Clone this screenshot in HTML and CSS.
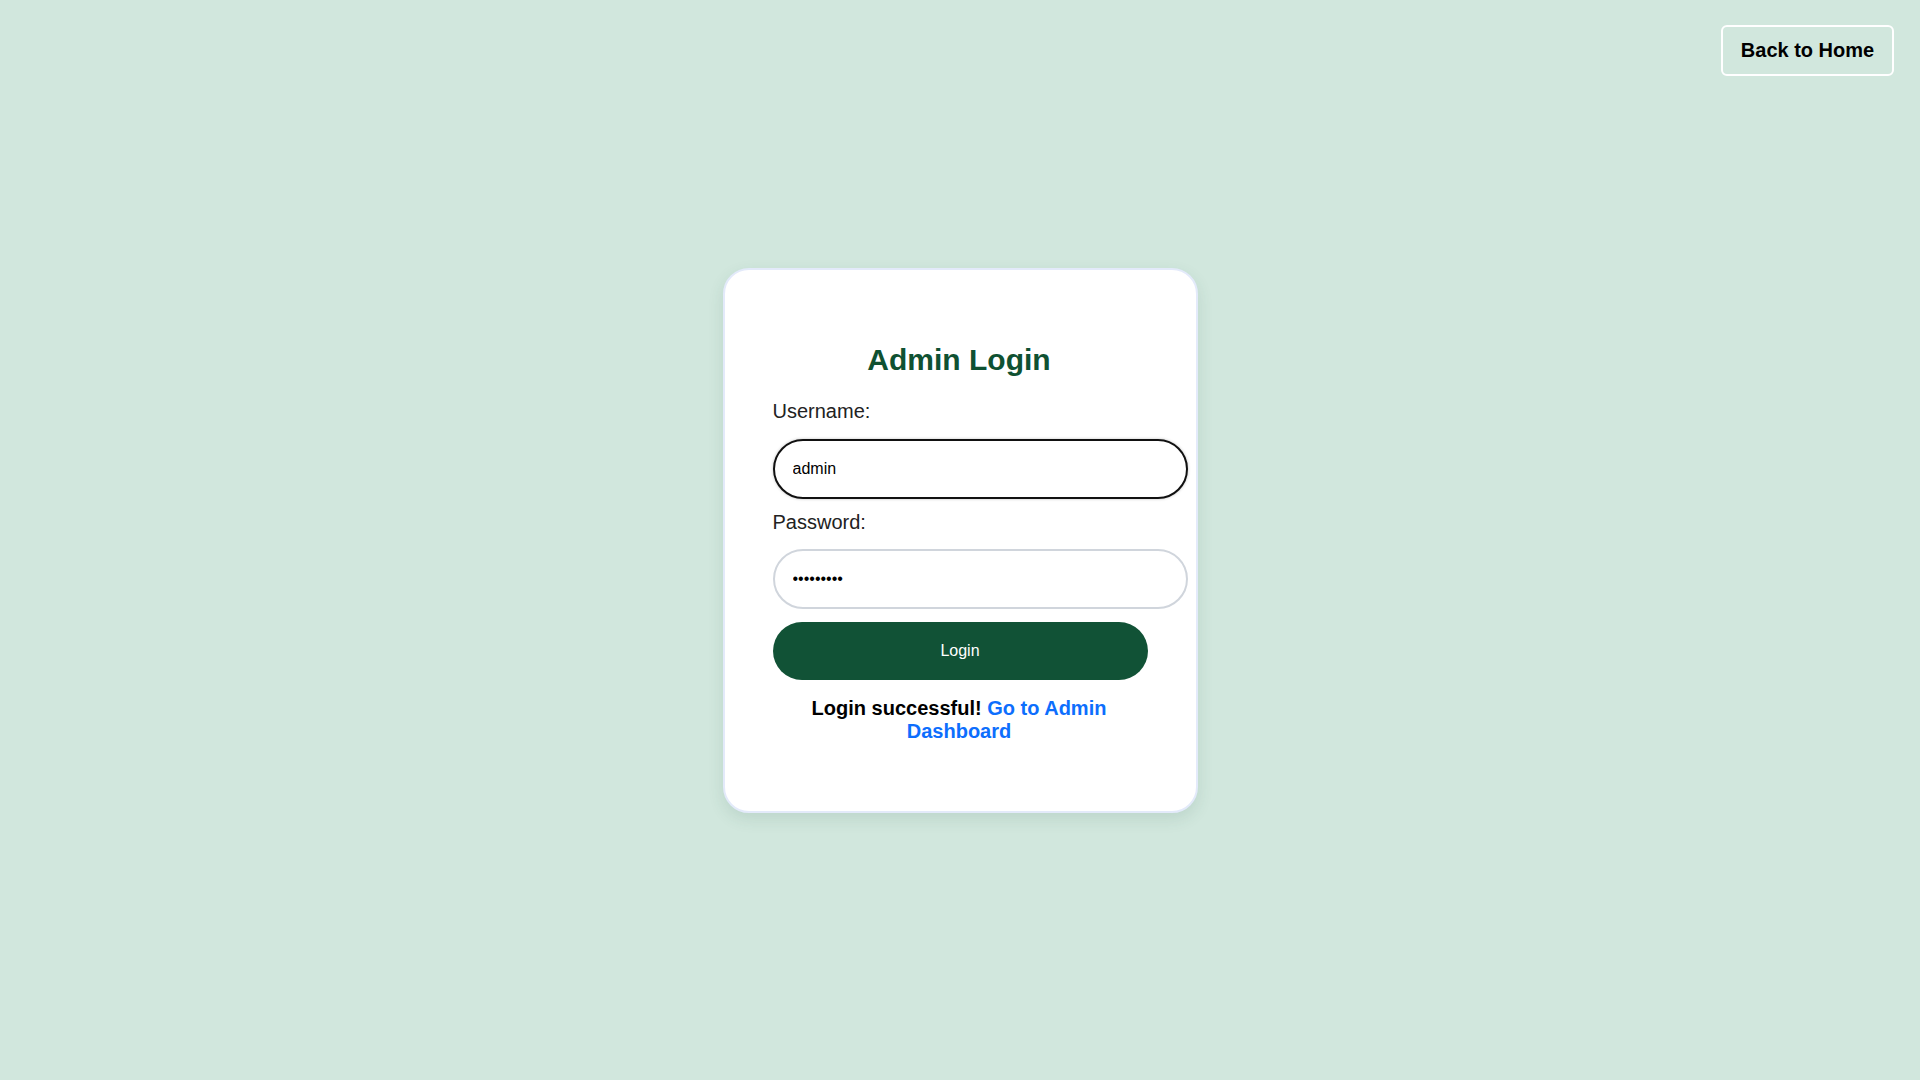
FILE: index.html
```html
<!DOCTYPE html>
<html lang="en">
<head>
<meta charset="utf-8">
<title>Admin Login</title>
<link rel="stylesheet" href="styles.css">
</head>
<body>
<a class="home-btn" href="#">Back to Home</a>
<main class="page">
  <form class="card">
    <h2 class="title">Admin Login</h2>
    <label class="label first" for="u">Username:</label>
    <input class="field active" id="u" type="text" value="admin">
    <label class="label" for="p">Password:</label>
    <input class="field" id="p" type="password" value="123456789">
    <button class="submit" type="button">Login</button>
    <p class="msg">Login successful! <a href="#" class="link">Go to Admin Dashboard</a></p>
  </form>
</main>
</body>
</html>
```
FILE: styles.css
```css
* { box-sizing: border-box; }
html, body { margin: 0; padding: 0; }
body {
  background: #d1e7dd;
  font-family: "Liberation Sans", Arial, sans-serif;
  color: #212529;
  min-height: 100vh;
}
.home-btn {
  position: absolute;
  top: 25px;
  right: 26px;
  width: 173px;
  height: 51px;
  border: 2px solid #fff;
  border-radius: 6px;
  display: flex;
  align-items: center;
  justify-content: center;
  font-weight: bold;
  font-size: 20px;
  color: #000;
  text-decoration: none;
}
.page {
  min-height: 100vh;
  display: flex;
  align-items: center;
  justify-content: center;
}
.card {
  width: 475px;
  background: #fff;
  border: 2px solid #e3eafa;
  border-radius: 26px;
  padding: 48px 50px 48px 48px;
  box-shadow: 0 6px 16px rgba(40, 90, 70, 0.12);
  display: flex;
  flex-direction: column;
}
.title {
  margin: 25px 0 0;
  font-size: 30px;
  line-height: 34px;
  font-weight: bold;
  color: #0f5132;
  text-align: center;
}
.label {
  font-size: 20px;
  line-height: 23px;
  margin-top: 12px;
  margin-bottom: 15px;
  color: #222;
}
.label.first { margin-top: 23px; margin-bottom: 16px; }
.field {
  width: 415px;
  height: 60px;
  padding: 0 18px;
  border: 2px solid #d0d5dc;
  border-radius: 30px;
  font-family: "Liberation Sans", Arial, sans-serif;
  font-size: 16px;
  color: #000;
  background: #fff;
  outline: none;
}
.field.active {
  border-color: #111;
  box-shadow: 0 0 3px rgba(0, 0, 0, 0.25);
}
.submit {
  margin-top: 13px;
  width: 375px;
  height: 58px;
  border: none;
  border-radius: 29px;
  background: #115236;
  color: #fff;
  font-family: "Liberation Sans", Arial, sans-serif;
  font-size: 16px;
}
.msg {
  margin: 17px 0 20px;
  font-size: 20px;
  line-height: 23px;
  font-weight: bold;
  color: #000;
  text-align: center;
}
.link {
  color: #0d6efd;
  text-decoration: none;
}
```
